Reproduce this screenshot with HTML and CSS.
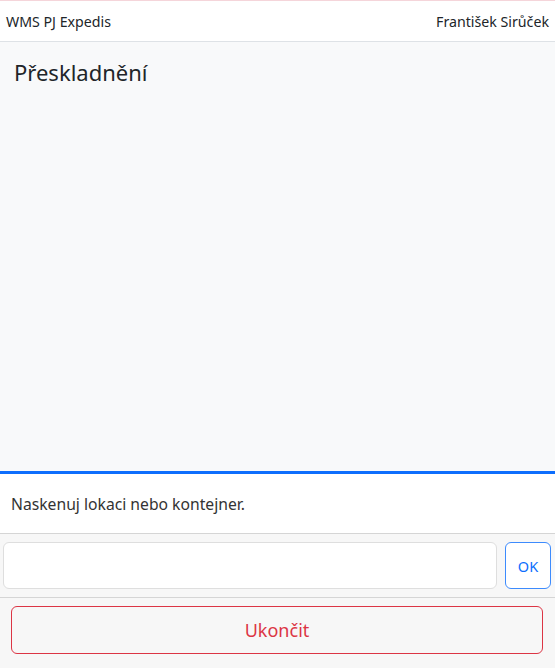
FILE: index.html
```html
<!DOCTYPE html>
<html lang="cs">
<head>
<meta charset="utf-8">
<title>WMS PJ Expedis</title>
<link rel="stylesheet" href="styles.css">
</head>
<body>
<div class="app">
  <header class="topbar">
    <span class="brand">WMS PJ Expedis</span>
    <span class="user">František Sirůček</span>
  </header>
  <main class="content">
    <h1 class="title">Přeskladnění</h1>
  </main>
  <section class="message">
    <p>Naskenuj lokaci nebo kontejner.</p>
  </section>
  <div class="scan-row">
    <input class="scan-input" type="text" aria-label="Kód">
    <button class="btn-ok" type="button">OK</button>
  </div>
  <div class="footer-row">
    <button class="btn-end" type="button">Ukončit</button>
  </div>
</div>
</body>
</html>
```
FILE: styles.css
```css
html, body {
  margin: 0;
  padding: 0;
  height: 100%;
}
body {
  font-family: "Noto Sans", "Liberation Sans", sans-serif;
  color: #212529;
  background: #f7f7f7;
}
.app {
  display: flex;
  flex-direction: column;
  height: 668px;
  border-top: 1px solid #f5d5da;
  box-sizing: border-box;
}
.topbar {
  display: flex;
  justify-content: space-between;
  align-items: center;
  height: 40px;
  padding: 0 6px;
  background: #fff;
  border-bottom: 1px solid #dee2e6;
  font-size: 14.2px;
  flex-shrink: 0;
}
.content {
  flex: 1;
  background: #f8f9fa;
  padding: 14px 14px;
}
.title {
  margin: 0;
  font-size: 22px;
  font-weight: 400;
  line-height: 32px;
}
.message {
  background: #fff;
  border-top: 3px solid #0d6efd;
  border-bottom: 1px solid #d5d5d5;
  height: 59px;
  display: flex;
  align-items: center;
  padding: 0 11px;
  flex-shrink: 0;
}
.message p {
  margin: 0;
  font-size: 15.7px;
  color: #333;
}
.scan-row {
  display: flex;
  gap: 8px;
  padding: 8px 4px 8px 3px;
  border-bottom: 1px solid #d5d5d5;
  background: #f7f7f7;
  flex-shrink: 0;
}
.scan-input {
  flex: 1;
  height: 47px;
  box-sizing: border-box;
  border: 1px solid #dedede;
  border-radius: 6px;
  background: #fff;
  font: inherit;
}
.btn-ok {
  width: 46px;
  height: 47px;
  box-sizing: border-box;
  border: 1px solid #3d8bfd;
  border-radius: 6px;
  background: #fff;
  color: #0d6efd;
  font: inherit;
  font-size: 14.5px;
  cursor: pointer;
}
.footer-row {
  padding: 8px 12px 14px 11px;
  background: #f7f7f7;
  flex-shrink: 0;
}
.btn-end {
  width: 100%;
  height: 48px;
  box-sizing: border-box;
  border: 1px solid #dc3545;
  border-radius: 6px;
  background: transparent;
  color: #dc3545;
  font: inherit;
  font-size: 18px;
  cursor: pointer;
}
```
